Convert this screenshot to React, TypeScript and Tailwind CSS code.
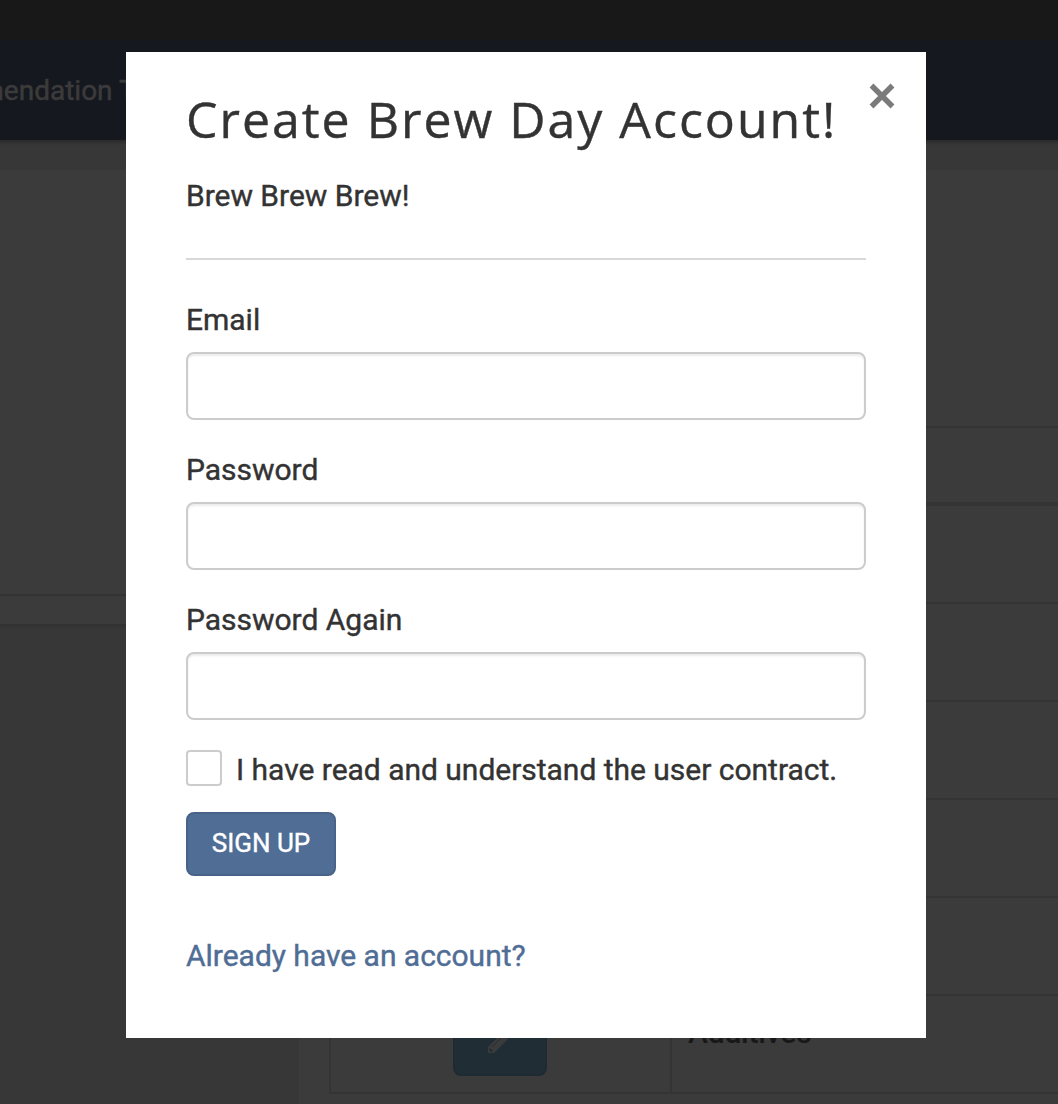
function Field({ label, type, id }: { label: string; type: string; id: string }) {
  return (
    <div className="mb-[30px]">
      <label htmlFor={id} className="mb-[12px] block h-[40px] leading-[40px]">{label}</label>
      <input
        id={id}
        type={type}
        className="block h-[68px] w-full rounded-[8px] border-2 border-[#cccccc] bg-white px-6 shadow-[inset_0_2px_2px_rgba(0,0,0,0.075)] outline-none"
      />
    </div>
  );
}

const rowClass = "h-[98px] shrink-0 border-b-2 border-[#343434]";

function Backdrop() {
  return (
    <div className="flex h-full flex-col bg-[#3b3b3b]">
      <div className="h-[40px] shrink-0 bg-[#181818]" />
      <nav className="h-[100px] shrink-0 overflow-hidden bg-[#15181f]">
        <span className="-ml-[108px] block text-[28px] leading-[101px] whitespace-nowrap text-[#3b3b3b] [-webkit-text-stroke:0.5px_#3b3b3b]">Recommendation Tool</span>
      </nav>
      <div className="h-[30px] shrink-0 bg-linear-to-b from-[#292929] to-[#373737] to-[5px]" />
      <div className="flex min-h-0 grow">
        <aside className="flex w-[299px] shrink-0 flex-col">
          <div className="h-[426px] shrink-0 border-b-2 border-[#333333]" />
          <div className="h-[28px] shrink-0" />
          <div className="grow bg-linear-to-b from-[#313131] to-[#373737] to-[5px]" />
        </aside>
        <main className="min-w-0 grow pl-[30px]">
          <div className="flex h-[924px] flex-col border-l-2 border-[#343434]">
            <div className="h-[258px] shrink-0 border-b-2 border-[#343434]" />
            <div className="h-[78px] shrink-0 border-b-4 border-[#343434]" />
            <div className={rowClass} />
            <div className={rowClass} />
            <div className={rowClass} />
            <div className={rowClass} />
            <div className={rowClass} />
            <div className="flex h-[98px] shrink-0 border-b-2 border-[#343434]">
              <div className="flex w-[341px] shrink-0 justify-center border-r-2 border-[#343434] pt-[16px] pr-[2px]">
                <div className="flex h-[64px] w-[94px] items-center justify-center rounded-[8px] border-2 border-[#1e2b32] bg-[#202d34]">
                  <svg width="25" height="25" viewBox="0 0 25 25" className="mt-[-5px] text-[#3b3b3b]">
                    <path fill="currentColor" d="M1 18 15 4l6 6L7 24H1z" />
                    <path fill="currentColor" d="m16 3 2-2q1-1 2 0l4 4q1 1 0 2l-2 2z" />
                    <path fill="none" stroke="#202d34" strokeWidth="1" d="m5 18L16 7" />
                    <path fill="#202d34" d="m3 19 3 3-2 1-2-2z" />
                  </svg>
                </div>
              </div>
              <div className="pl-[16px] text-[30px] leading-[74px] font-medium tracking-[-0.2px] text-[#181818]">Additives</div>
            </div>
          </div>
        </main>
      </div>
    </div>
  );
}

export default function App() {
  return (
    <div className="relative h-[1104px] w-[1058px] overflow-hidden font-['Roboto',sans-serif]">
      <Backdrop />
      <div role="dialog" className="absolute top-[52px] left-[126px] h-[986px] w-[800px] bg-white px-[60px] text-[30px] tracking-[-0.02px] text-[#333333] [-webkit-text-stroke:0.4px_currentColor]">
        <button aria-label="Close" className="absolute top-[31px] right-[31px] text-[#7b7b7b]">
          <svg width="26" height="26" viewBox="0 0 26 26" fill="none" stroke="currentColor" strokeWidth="5.4">
            <path d="m2.5 2.5 21 21M23.5 2.5l-21 21" />
          </svg>
        </button>
        <h1 className="pt-[32px] font-['Open_Sans',sans-serif] text-[50px] leading-[70px] tracking-[2px] whitespace-nowrap">Create Brew Day Account!</h1>
        <p className="mt-[22px] leading-[40px]">Brew Brew Brew!</p>
        <hr className="mt-[42px] mb-[40px] border-t-2 border-[#d8d8d8]" />
        <form>
          <Field id="email" label="Email" type="email" />
          <Field id="password" label="Password" type="password" />
          <Field id="password-again" label="Password Again" type="password" />
          <label className="flex h-[36px] items-center gap-[14px] whitespace-nowrap">
            <input type="checkbox" className="size-[36px] shrink-0 appearance-none rounded-[4px] border-2 border-[#cccccc] bg-white" />
            <span className="pt-[4px] leading-[40px]">I have read and understand the user contract.</span>
          </label>
          <button type="button" className="mt-[26px] block h-[64px] w-[150px] rounded-[8px] border-2 border-[#486288] bg-[#4f6d95] pb-[2px] text-[26px] text-white">SIGN UP</button>
        </form>
        <a href="#" className="mt-[60px] block leading-[40px] text-[#4f6d95]">Already have an account?</a>
      </div>
    </div>
  );
}
